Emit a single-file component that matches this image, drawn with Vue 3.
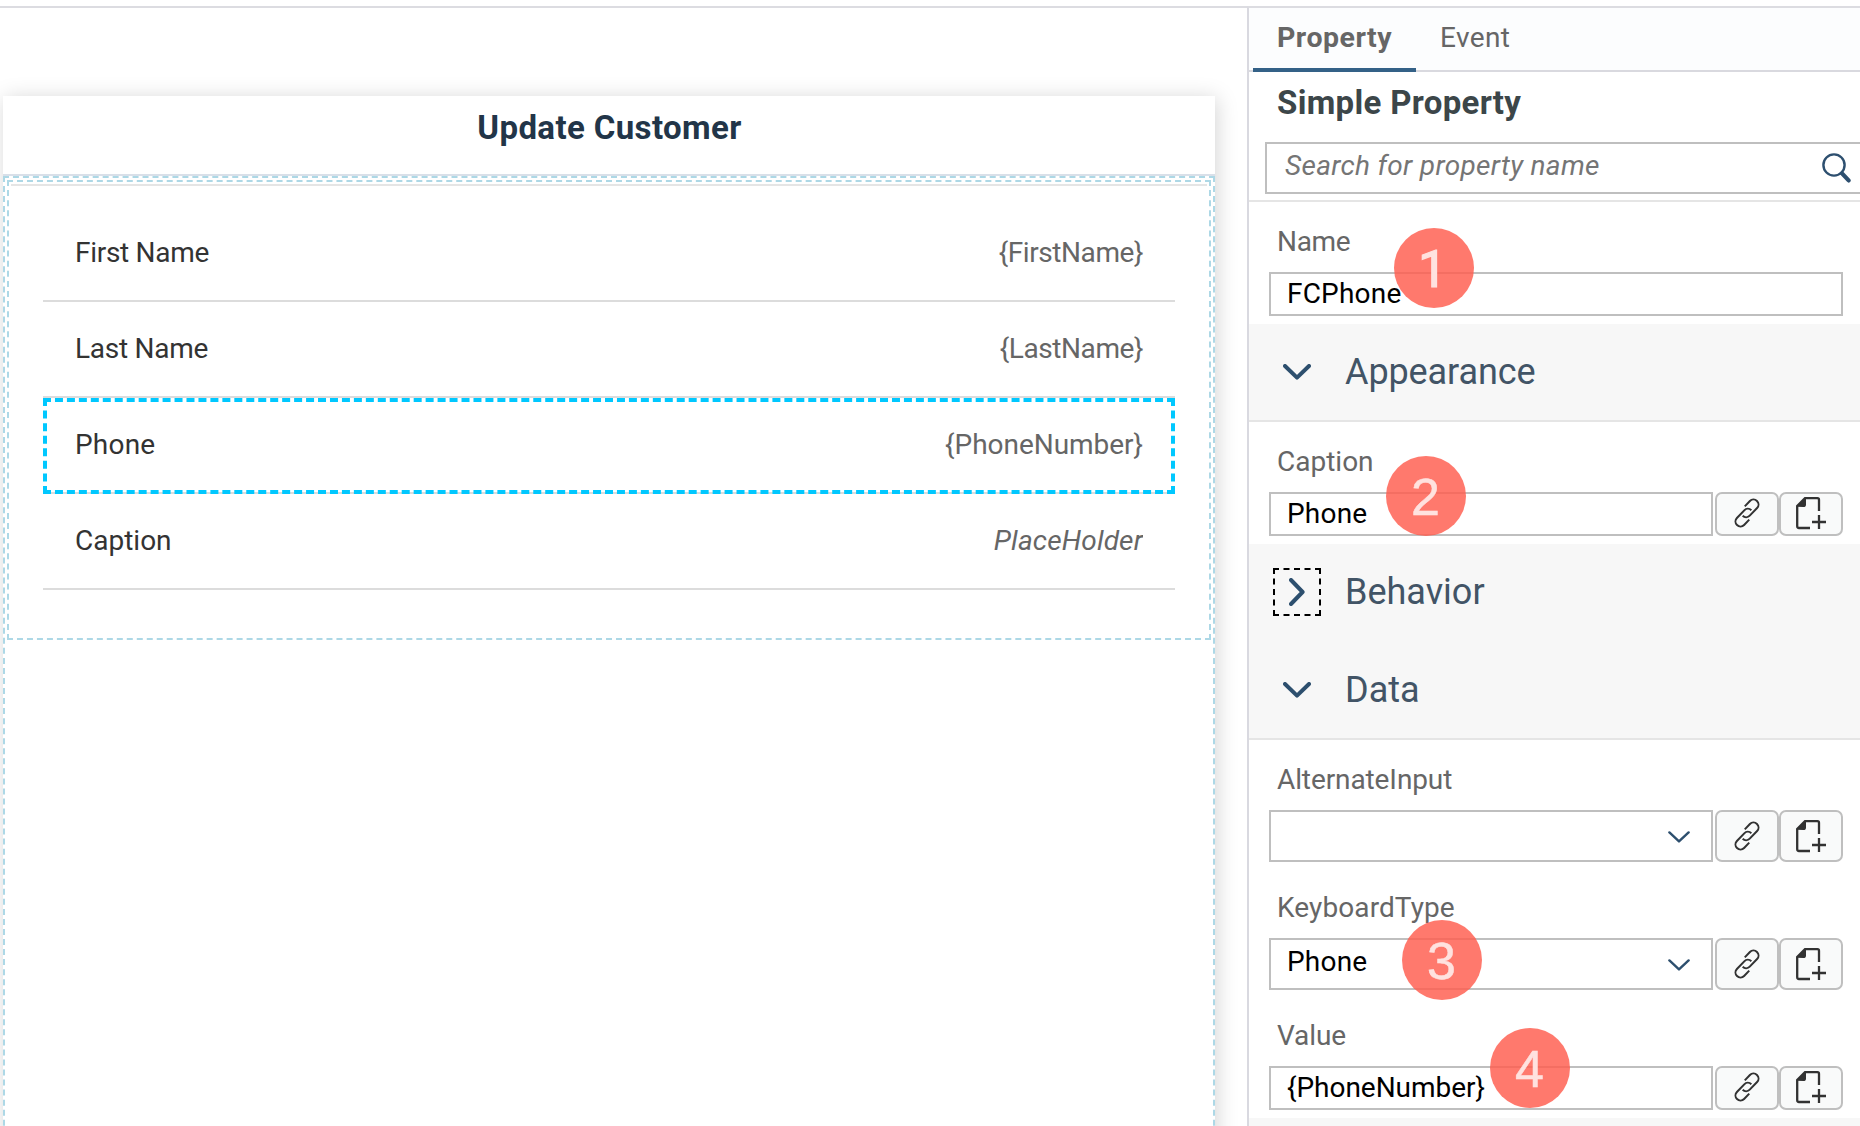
<script setup>
const rows = [
  { label: 'First Name', value: '{FirstName}', ls: -0.29, vs: -0.42 },
  { label: 'Last Name', value: '{LastName}', ls: -0.26, vs: -0.42 },
  { label: 'Phone', value: '{PhoneNumber}', ls: 0.2, vs: -0.03, selected: true },
  { label: 'Caption', value: 'PlaceHolder', ls: 0, vs: 0.15, placeholder: true },
]

const groups = [
  {
    fields: [{ label: 'Name', value: 'FCPhone', ls: -0.3, vs: 0.2 }],
  },
  {
    title: 'Appearance',
    open: true,
    ts: -0.1,
    fields: [{ label: 'Caption', value: 'Phone', ls: 0, vs: 0.2, bind: true }],
  },
  { title: 'Behavior', open: false, focused: true, ts: 0, fields: [] },
  {
    title: 'Data',
    open: true,
    ts: 0,
    fields: [
      { label: 'AlternateInput', value: '', ls: -0.1, vs: 0, bind: true, select: true },
      { label: 'KeyboardType', value: 'Phone', ls: 0.1, vs: 0.2, bind: true, select: true },
      { label: 'Value', value: '{PhoneNumber}', ls: -0.1, vs: -0.03, bind: true },
    ],
  },
]

const markers = [
  { n: 1, x: 1394, y: 228 },
  { n: 2, x: 1386, y: 456 },
  { n: 3, x: 1402, y: 920 },
  { n: 4, x: 1490, y: 1028 },
]

const spacing = (v) => ({ letterSpacing: v + 'px' })
</script>

<template>
  <div class="page">
    <main class="canvas">
      <section class="card">
        <h1 class="card-title">Update Customer</h1>
        <div class="drop-outer">
          <div class="drop-inner">
            <div class="rows">
              <div v-for="r in rows" :key="r.label" class="row" :class="{ selected: r.selected }">
                <span class="row-label" :style="spacing(r.ls)">{{ r.label }}</span>
                <span class="row-value" :class="{ placeholder: r.placeholder }" :style="spacing(r.vs)">{{ r.value }}</span>
              </div>
            </div>
          </div>
        </div>
      </section>
    </main>

    <aside class="panel">
      <nav class="tabs">
        <span class="tab active">Property</span>
        <span class="tab">Event</span>
      </nav>
      <h2 class="panel-title">Simple Property</h2>
      <div class="search-wrap">
        <div class="search">
          <span class="search-text">Search for property name</span>
          <svg class="search-icon" width="30" height="30" viewBox="0 0 30 30" fill="none" stroke="#2d4f6f">
            <circle cx="12" cy="12" r="10.6" stroke-width="2.4" />
            <path d="M20 20.4 L26.6 27.4" stroke-width="4.2" stroke-linecap="round" />
          </svg>
        </div>
      </div>

      <div v-for="(g, i) in groups" :key="i" class="group">
        <header v-if="g.title" class="group-head" :class="{ open: g.open }">
          <span class="toggle" :class="{ focused: g.focused }">
            <svg v-if="g.open" width="28" height="16" viewBox="0 0 28 16" class="chev">
              <path d="M2 2 L14 13.6 L26 2" />
            </svg>
            <svg v-else width="16" height="28" viewBox="0 0 16 28" class="chev">
              <path d="M2 2 L13.6 14 L2 26" />
            </svg>
          </span>
          <span class="group-title" :style="spacing(g.ts)">{{ g.title }}</span>
        </header>
        <div v-if="g.fields.length" class="fields">
          <div v-for="f in g.fields" :key="f.label" class="field">
            <label class="field-label" :style="spacing(f.ls)">{{ f.label }}</label>
            <div class="controls" :class="{ tall: f.select }">
              <div class="input">
                <span class="input-text" :style="spacing(f.vs)">{{ f.value }}</span>
                <svg v-if="f.select" class="drop" width="22" height="12" viewBox="0 0 22 12">
                  <path d="M1.4 1.4 L11 10.4 L20.6 1.4" />
                </svg>
              </div>
              <template v-if="f.bind">
                <button class="btn first">
                  <svg width="28" height="28" viewBox="-14 -14 28 28" class="glyph link">
                    <g transform="rotate(-46)">
                      <path d="M3.2 -6.2 H10.6 A5 5 0 0 1 10.6 3.8 H0 A5 5 0 0 1 -5 -1.2" />
                      <path d="M-3.2 6.2 H-10.6 A5 5 0 0 1 -10.6 -3.8 H0 A5 5 0 0 1 5 1.2" />
                    </g>
                  </svg>
                </button>
                <button class="btn">
                  <svg width="30" height="32" viewBox="0 0 30 32" class="glyph">
                    <path d="M14 31 H3 Q1.2 31 1.2 29 V9 L9 1.2 H21.5 Q23 1.2 23 2.8 V14" />
                    <path d="M0.8 9.8 L8.6 1 H10 V7.4 Q10 10 7.4 10 Z" fill="#323232" stroke="none" />
                    <path d="M16 25 H30 M23 18 V32" />
                  </svg>
                </button>
              </template>
            </div>
          </div>
        </div>
      </div>
      <div class="next-group"></div>
    </aside>

    <span
      v-for="m in markers"
      :key="m.n"
      class="marker"
      :class="{ one: m.n === 1 }"
      :style="{ left: m.x + 'px', top: m.y + 'px' }"
    >{{ m.n }}</span>
  </div>
</template>

<style>
body {
  margin: 0;
  overflow: hidden;
  background: #fff;
}
</style>

<style scoped>
* {
  box-sizing: border-box;
}
.page {
  position: relative;
  display: flex;
  width: 1860px;
  height: 1126px;
  padding-top: 6px;
  overflow: hidden;
  background: #fff;
  font-family: Roboto, 'Liberation Sans', sans-serif;
  font-size: 28px;
  white-space: nowrap;
}
.canvas {
  width: 1247px;
  height: 1120px;
  flex: none;
  border-top: 2px solid #dcdce1;
  padding: 88px 0 0 3px;
  overflow: hidden;
}
.card {
  display: flex;
  flex-direction: column;
  width: 1212px;
  height: 1100px;
  background: #fff;
  box-shadow: 2px 2px 20px rgba(0, 0, 0, 0.17);
}
.card-title {
  flex: none;
  margin: 0;
  height: 80px;
  padding-left: 1px;
  border-bottom: 2px solid #d9e0e9;
  color: #223548;
  font-size: 33px;
  font-weight: 700;
  line-height: 63px;
  letter-spacing: 0.38px;
  text-align: center;
}
.drop-outer {
  flex: 1;
  border: 2px dashed #add8e6;
  padding: 2px;
}
.drop-inner {
  height: 460px;
  border: 2px dashed #add8e6;
  padding: 2px;
}
.rows {
  height: 430px;
  border-top: 2px solid #e5e5e5;
  padding: 20px 32px 0;
}
.row {
  position: relative;
  display: flex;
  justify-content: space-between;
  height: 96px;
  padding: 0 32px;
  border-bottom: 2px solid #dcdcdc;
  line-height: 93px;
}
.row.selected::after {
  content: '';
  position: absolute;
  inset: 0 0 -2px;
  border: 4px dashed #00c8ff;
}
.row-label {
  color: #333;
}
.row-value {
  color: #666;
}
.row-value.placeholder {
  font-style: italic;
  overflow: hidden;
}

.panel {
  flex: none;
  width: 613px;
  border-top: 2px solid #dcdce1;
  border-left: 2px solid #d9d9e0;
}
.tabs {
  display: flex;
  height: 64px;
  padding-left: 4px;
  border-bottom: 2px solid #d9d9df;
  background: #fcfdfe;
  color: #666;
  line-height: 60px;
}
.tab {
  width: 163px;
  height: 64px;
  padding-left: 24px;
  letter-spacing: 0.4px;
}
.tab.active {
  border-bottom: 4px solid #346187;
  font-size: 28.5px;
  font-weight: 700;
  letter-spacing: 0.5px;
}
.panel-title {
  margin: 0;
  height: 70px;
  padding-left: 28px;
  color: #3c4649;
  font-size: 33px;
  font-weight: 700;
  line-height: 61px;
  letter-spacing: 0.32px;
}
.search-wrap {
  height: 60px;
  padding-left: 16px;
  border-bottom: 2px solid #e5e5e5;
}
.search {
  display: flex;
  justify-content: space-between;
  height: 52px;
  padding: 0 8px 0 18px;
  border: 2px solid #bfbfbf;
  border-right: 0;
}
.search-text {
  color: #757575;
  font-style: italic;
  line-height: 43px;
  letter-spacing: 0.32px;
}
.search-icon {
  margin-top: 9px;
}

.group-head {
  display: flex;
  align-items: center;
  height: 98px;
  padding: 0 0 2px 24px;
  background: #f7f7f7;
}
.group-head.open {
  padding-bottom: 0;
  border-bottom: 2px solid #e5e5e5;
}
.toggle {
  display: flex;
  align-items: center;
  justify-content: center;
  width: 48px;
  height: 48px;
}
.toggle.focused {
  border: 2px dashed #000;
}
.chev {
  fill: none;
  stroke: #2d4f6e;
  stroke-width: 4;
  stroke-linecap: round;
  stroke-linejoin: round;
}
.group-title {
  padding-left: 24px;
  color: #425466;
  font-size: 36px;
  line-height: 96px;
}
.field {
  padding: 0 17px 8px 20px;
}
.field-label {
  display: block;
  height: 68px;
  padding-left: 8px;
  color: #666;
  line-height: 75px;
}
.fields {
  padding-top: 2px;
}
.controls {
  display: flex;
  height: 44px;
}
.controls.tall {
  height: 52px;
}
.input {
  display: flex;
  flex: 1;
  justify-content: space-between;
  align-items: flex-start;
  padding: 0 21px 0 16px;
  border: 2px solid #bfbfbf;
  background: #fff;
}
.input-text {
  color: #000;
  line-height: 39px;
}
.tall .input-text {
  line-height: 43px;
}
.drop {
  margin-top: 19px;
  fill: none;
  stroke: #2d4f6e;
  stroke-width: 2.4;
  stroke-linecap: round;
  stroke-linejoin: round;
}
.btn {
  display: flex;
  align-items: center;
  justify-content: center;
  width: 64px;
  padding: 0 0 2px;
  border: 2px solid #bfbfbf;
  border-radius: 7px;
  background: #f9fafa;
}
.tall .btn {
  padding-bottom: 0;
}
.btn.first {
  margin-left: 2px;
}
.glyph {
  overflow: visible;
  fill: none;
  stroke: #323232;
  stroke-width: 2.3;
}
.glyph.link {
  stroke-width: 2;
}
.next-group {
  height: 98px;
  background: #f7f7f7;
}

.marker {
  position: absolute;
  width: 80px;
  height: 80px;
  padding-right: 1px;
  border-radius: 50%;
  background: rgba(255, 92, 77, 0.82);
  color: #ffe2df;
  font-family: 'Liberation Sans', Arial, sans-serif;
  font-size: 52px;
  line-height: 83px;
  text-align: center;
  -webkit-text-stroke: 0.5px #ffe2df;
}
.marker.one {
  padding-right: 3px;
  font-family: Roboto, sans-serif;
  -webkit-text-stroke-width: 1.2px;
}
</style>
